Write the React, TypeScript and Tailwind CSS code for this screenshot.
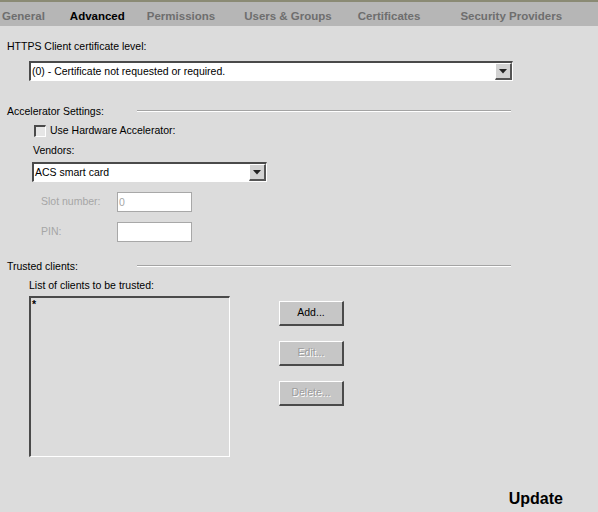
import React from "react";

const tabs = [
  { label: "General", ml: "ml-[2px]", active: false },
  { label: "Advanced", ml: "ml-[25px]", active: true },
  { label: "Permissions", ml: "ml-[22px]", active: false },
  { label: "Users & Groups", ml: "ml-[29px]", active: false },
  { label: "Certificates", ml: "ml-[26px]", active: false },
  { label: "Security Providers", ml: "ml-[40px]", active: false },
];

function Combo({ text, className }: { text: string; className: string }) {
  return (
    <div
      className={
        "flex h-[20px] border-t-2 border-l-2 border-t-[#4a4a4a] border-l-[#4a4a4a] border-b border-r border-b-white border-r-white bg-white " +
        className
      }
    >
      <div className="flex-1 pl-[1px] text-[10.5px] leading-[17px] text-black truncate">{text}</div>
      <div className="w-[17px] h-[17px] bg-[#d2d2d2] border-t border-l border-t-white border-l-white border-b-2 border-r-2 border-b-[#555] border-r-[#555] flex items-center justify-center">
        <svg width="8" height="5" viewBox="0 0 8 5">
          <path d="M0 0h8L4 4.5z" fill="#222" />
        </svg>
      </div>
    </div>
  );
}

function SectionHeader({ label, className }: { label: string; className: string }) {
  return (
    <div className={"flex items-center h-[14px] " + className}>
      <div className="w-[137px] pl-[7px] text-[10.5px] leading-[14px] text-black">{label}</div>
      <div className="w-[374px] h-[2px] border-t border-t-[#a4a4a4] border-b border-b-white" />
    </div>
  );
}

function Btn({ label, disabled }: { label: string; disabled?: boolean }) {
  return (
    <div
      className={
        "w-[65px] h-[25px] bg-[#c6c6c6] border-t border-l border-t-white border-l-white border-b-2 border-r-2 border-b-[#4a4a4a] border-r-[#4a4a4a] flex items-center justify-center text-[10.5px] " +
        (disabled ? "text-[#9c9c9c] [text-shadow:1px_1px_0_#fff]" : "text-black")
      }
    >
      {label}
    </div>
  );
}

export default function App() {
  return (
    <div className="w-[598px] h-[512px] overflow-hidden bg-[#dcdcdc] font-['Liberation_Sans',Arial,sans-serif] flex flex-col">
      <div className="h-[26px] shrink-0 border-t-2 border-t-[#8a8a74] bg-[#b6b6b6] flex items-center pt-[4px]">
        {tabs.map((t) => (
          <span
            key={t.label}
            className={
              "text-[11.5px] font-bold leading-[14px] whitespace-nowrap " +
              t.ml +
              (t.active ? " text-black" : " text-[#6e6e6e]")
            }
          >
            {t.label}
          </span>
        ))}
      </div>

      <div className="mt-[14px] h-[13px] pl-[7px] text-[10.5px] leading-[13px] text-black">
        HTTPS Client certificate level:
      </div>
      <Combo text="(0) - Certificate not requested or required." className="mt-[8px] ml-[29px] w-[484px]" />

      <SectionHeader label="Accelerator Settings:" className="mt-[23px]" />

      <div className="mt-[6px] h-[13px] flex items-center pl-[34px]">
        <div className="w-[12px] h-[12px] border-t-2 border-l-2 border-t-[#4a4a4a] border-l-[#4a4a4a] border-b border-r border-b-white border-r-white bg-[#e6e6e6]" />
        <span className="ml-[4px] text-[10.5px] leading-[13px] text-black">Use Hardware Accelerator:</span>
      </div>

      <div className="mt-[7px] h-[13px] pl-[33px] text-[10.5px] leading-[13px] text-black">Vendors:</div>
      <Combo text="ACS smart card" className="mt-[5px] ml-[32px] w-[235px]" />

      <div className="mt-[10px] h-[20px] flex items-center">
        <span className="w-[117px] pl-[41px] text-[10.5px] text-[#a6a6a6]">Slot number:</span>
        <div className="w-[75px] h-[20px] bg-white border border-[#a8a8a8] text-[10.5px] leading-[18px] pl-[1px] text-[#a6a6a6]">
          0
        </div>
      </div>
      <div className="mt-[10px] h-[20px] flex items-center">
        <span className="w-[117px] pl-[41px] text-[10.5px] text-[#a6a6a6]">PIN:</span>
        <div className="w-[75px] h-[20px] bg-white border border-[#a8a8a8]" />
      </div>

      <SectionHeader label="Trusted clients:" className="mt-[17px]" />

      <div className="mt-[6px] h-[13px] pl-[29px] text-[10.5px] leading-[13px] text-black">
        List of clients to be trusted:
      </div>

      <div className="mt-[4px] flex pl-[29px]">
        <div className="w-[201px] h-[161px] border-t-2 border-l-2 border-t-[#4a4a4a] border-l-[#4a4a4a] border-b border-r border-b-white border-r-white">
          <div className="pl-[1px] text-[10.5px] leading-[13px] font-bold text-black">*</div>
        </div>
        <div className="ml-[49px] mt-[5px] flex flex-col gap-[15px]">
          <Btn label="Add..." />
          <Btn label="Edit..." disabled />
          <Btn label="Delete..." disabled />
        </div>
      </div>

      <div className="mt-[33px] flex justify-end pr-[35px]">
        <span className="text-[16px] font-bold leading-[18px] text-black">Update</span>
      </div>
    </div>
  );
}
